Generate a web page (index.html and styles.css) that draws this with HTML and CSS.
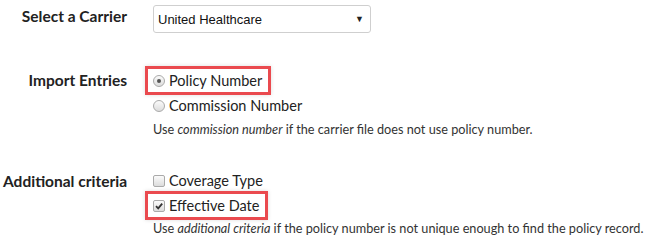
FILE: index.html
```html
<!DOCTYPE html>
<html>
<head>
<meta charset="utf-8">
<link rel="stylesheet" href="styles.css">
</head>
<body>
<div class="form">
  <div class="row row-carrier">
    <div class="label">Select a Carrier</div>
    <div class="field">
      <div class="select">
        <span class="select-text">United Healthcare</span>
        <span class="select-arrow">&#9660;</span>
      </div>
    </div>
  </div>

  <div class="row row-import">
    <div class="label">Import Entries</div>
    <div class="field">
      <div class="option highlight"><span class="radio checked"></span><span class="opt-text">Policy Number</span></div>
      <div class="option"><span class="radio"></span><span class="opt-text">Commission Number</span></div>
      <div class="help">Use <em>commission number</em> if the carrier file does not use policy number.</div>
    </div>
  </div>

  <div class="row row-criteria">
    <div class="label">Additional criteria</div>
    <div class="field">
      <div class="option"><span class="check"></span><span class="opt-text">Coverage Type</span></div>
      <div class="option highlight"><span class="check checked"><svg viewBox="0 0 10 10" width="10" height="10"><path d="M2 5.2 L4.2 7.4 L8.2 2.6" fill="none" stroke="#333" stroke-width="1.8"/></svg></span><span class="opt-text">Effective Date</span></div>
      <div class="help">Use <em>additional criteria</em> if the policy number is not unique enough to find the policy record.</div>
    </div>
  </div>
</div>
</body>
</html>
```

FILE: styles.css
```css
html, body {
  margin: 0;
  padding: 0;
  background: #fff;
}
body {
  font-family: "Lato", "Open Sans", sans-serif;
  color: #333;
  width: 655px;
  height: 242px;
  overflow: hidden;
}
.form {
  padding-top: 5px;
}
.row {
  display: grid;
  grid-template-columns: 127px 1fr;
  column-gap: 26px;
}
.label {
  text-align: right;
  font-weight: 700;
  font-size: 15.5px;
  line-height: 19px;
  color: #222;
  white-space: nowrap;
}
.row-carrier {
  height: 63px;
}
.row-carrier .label {
  padding-top: 2px;
}
.select {
  border: 1px solid #cfcfcf;
  border-radius: 3px;
  display: flex;
  align-items: center;
  justify-content: space-between;
  padding: 0 6px 0 4px;
  box-sizing: border-box;
  width: 218px;
  height: 28px;
  font-family: "Liberation Sans", Arial, sans-serif;
  font-size: 13px;
  color: #111;
}
.select-arrow {
  font-size: 9px;
  color: #222;
}
.row-import {
  height: 100px;
}
.row-import .label {
  padding-top: 3px;
}
.row-criteria .label {
  padding-top: 4px;
}
.option {
  display: flex;
  align-items: center;
  height: 25px;
  width: fit-content;
  font-size: 14.5px;
  color: #222;
}
.option.highlight {
  height: 23px;
  margin: 1px 0 1px -5px;
  padding: 0 6px 0 5px;
  outline: 3px solid #ea4a4f;
  box-shadow: 0 0 4px 3px rgba(0,0,0,0.14);
}
.opt-text {
  margin-left: 4px;
}
.radio {
  width: 10px;
  height: 10px;
  border: 1px solid #aaa;
  border-radius: 50%;
  background: linear-gradient(#fbfbfb, #dcdcdc);
  display: inline-flex;
  align-items: center;
  justify-content: center;
}
.radio.checked::after {
  content: "";
  width: 4px;
  height: 4px;
  border-radius: 50%;
  background: #555;
}
.check {
  width: 10px;
  height: 10px;
  border: 1px solid #aaa;
  border-radius: 2px;
  background: linear-gradient(#fbfbfb, #dcdcdc);
  display: inline-flex;
  align-items: center;
  justify-content: center;
}
.check svg {
  display: block;
}
.help {
  font-size: 12.7px;
  line-height: 16px;
  color: #333;
  margin-top: 3px;
  white-space: nowrap;
}
.help em {
  font-style: italic;
}
```
